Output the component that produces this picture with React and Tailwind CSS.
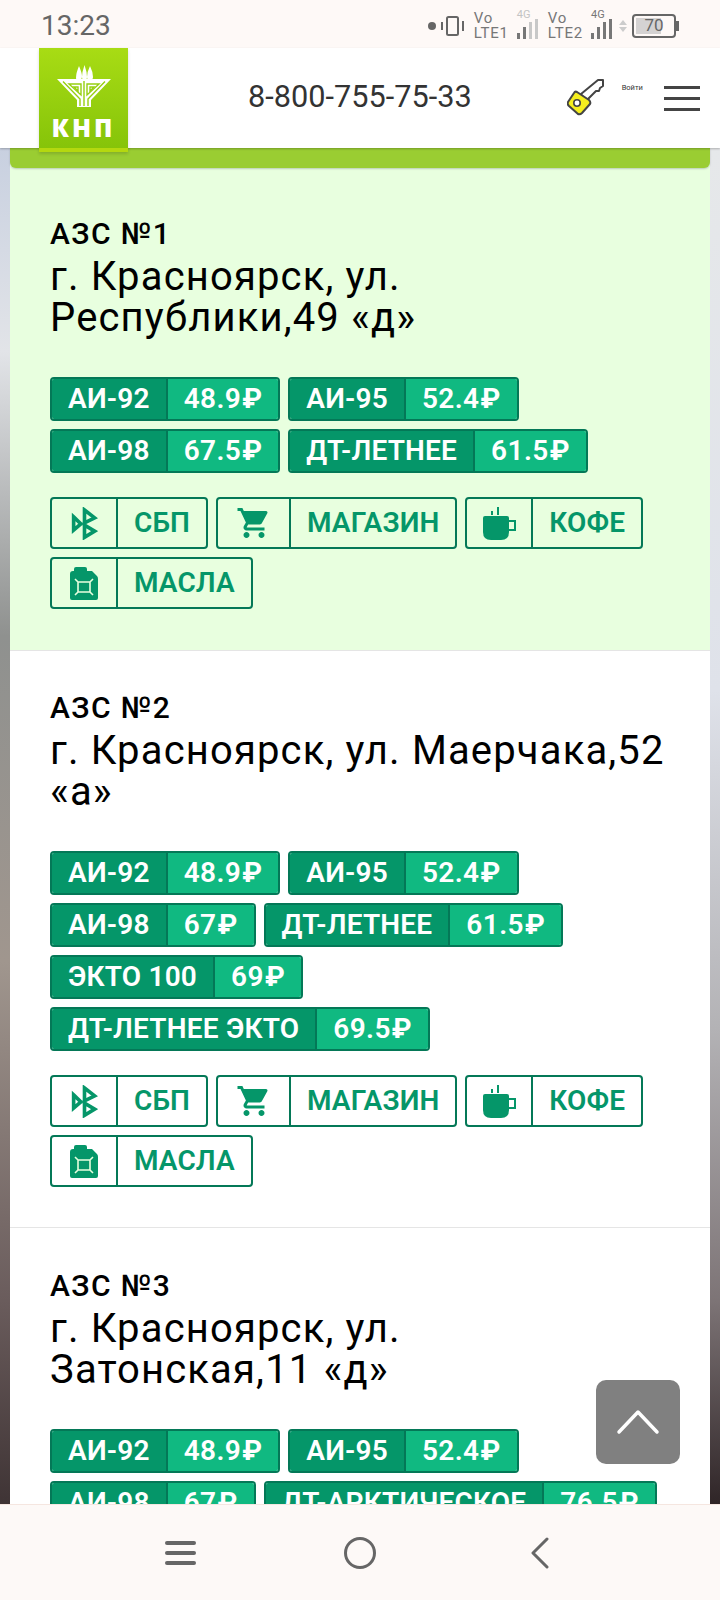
import React from "react";
import { MdShoppingCart } from "react-icons/md";

function Sbp() {
  return (
    <svg width="27" height="33" viewBox="30 33 82 100" fill="none" stroke="#059669" strokeWidth="11" strokeLinejoin="miter">
      <path d="M71 42 L102 66 L71 81 Z" />
      <path d="M38 63 L60 84 L38 103 Z" />
      <path d="M71 88 L102 106 L71 125 Z" />
    </svg>
  );
}
function Cart() {
  return <MdShoppingCart className="text-[36px] text-[#059669]" />;
}
function Cup() {
  return (
    <svg width="33" height="33" viewBox="0 0 33 33" fill="#059669">
      <rect x="8" y="4" width="2" height="4" />
      <rect x="14" y="0" width="2" height="8" />
      <path d="M0 11 Q0 9 2 9 H24 Q26 9 26 11 V25 Q26 33 18 33 H8 Q0 33 0 25 Z" />
      <path fillRule="evenodd" d="M26 13 H33 V24 H26 V22 H31 V15 H26 Z" />
    </svg>
  );
}
function Can() {
  return (
    <svg width="28" height="33" viewBox="0 0 28 33">
      <path fill="#059669" d="M6 0 H15 Q17 0 17 2 V4 H22 L27 9 Q28 10 28 12 V31 Q28 33 26 33 H2 Q0 33 0 31 V7 Q0 4 3 4 H4 V2 Q4 0 6 0 Z" />
      <path fill="none" stroke="#e8ffdf" strokeWidth="1.6" d="M8 15 H20 V25 H8 Z M5 12 L8 15 M23 12 L20 15 M5 28 L8 25 M23 28 L20 25" />
    </svg>
  );
}

function Price({ name, price }) {
  return (
    <div className="flex h-[44px] overflow-hidden rounded-[4px] border-2 border-[#047857] font-semibold text-[28px] leading-none tracking-[0.2px] text-white">
      <div className="flex items-center border-r-2 border-[#047857] bg-[#059669] pl-4 pr-[16px] whitespace-nowrap">{name}</div>
      <div className="flex items-center bg-[#10b981] pl-[16px] pr-[16px] whitespace-nowrap tracking-[0.4px]">
        {price}<span className="ml-[1px] font-bold">₽</span>
      </div>
    </div>
  );
}

function Tag({ icon, label, cell }) {
  return (
    <div className="flex h-[52px] rounded-[4px] border-2 border-[#047857] text-[28px] font-semibold leading-none tracking-[0.1px] text-[#059669]">
      <div className={`flex items-center justify-center border-r-2 border-[#047857] ${cell}`}>{icon}</div>
      <div className="flex items-center px-4 whitespace-nowrap">{label}</div>
    </div>
  );
}

const TAGS = [
  { icon: <Sbp />, label: "СБП", cell: "w-[66px]" },
  { icon: <Cart />, label: "МАГАЗИН", cell: "w-[73px]" },
  { icon: <Cup />, label: "КОФЕ", cell: "w-[66px]" },
  { icon: <Can />, label: "МАСЛА", cell: "w-[66px]" },
];

function Station({ title, lines, prices, className }) {
  return (
    <section className={className}>
      <h2 className="text-[30px] font-medium leading-[32px] tracking-[1.4px] text-black">{title}</h2>
      <p className="mt-[6px] pr-[2px] text-[40px] leading-[41px] tracking-[1.15px] text-black">{lines}</p>
      <div className="mt-[39px] flex flex-wrap gap-2">
        {prices.map((p) => (
          <Price key={p[0]} name={p[0]} price={p[1]} />
        ))}
      </div>
      <div className="mt-6 flex flex-wrap gap-2">
        {TAGS.map((t) => (
          <Tag key={t.label} icon={t.icon} label={t.label} cell={t.cell} />
        ))}
      </div>
    </section>
  );
}

function Signal({ faded }) {
  const c = faded ? "bg-[#c8c8c8]" : "bg-[#777]";
  return (
    <div className="relative flex h-[26px] w-[23px] items-end gap-[3px]">
      <span className={`absolute left-0 top-[-4px] text-[11px] leading-none ${faded ? "text-[#c4c4c4]" : "text-[#777]"}`}>4G</span>
      <span className="h-[6px] w-[3px] bg-[#777]" />
      <span className="h-[12px] w-[3px] bg-[#777]" />
      <span className={`h-[17px] w-[3px] ${c}`} />
      <span className={`h-[20px] w-[3px] ${c}`} />
    </div>
  );
}

function Lte({ n }) {
  return (
    <div className="text-[15px] leading-[15px] tracking-[0.8px] text-[#777]">
      <div>Vo</div>
      <div>LTE{n}</div>
    </div>
  );
}

export default function App() {
  return (
    <div className="flex h-[1600px] w-[720px] flex-col overflow-hidden font-['Roboto',sans-serif]">
      <div className="flex h-[48px] items-center justify-between bg-[#fef9f7] pl-[41px] pr-[41px] pt-[3px]">
        <span className="text-[28px] leading-none text-[#666]">13:23</span>
        <div className="flex items-center">
          <span className="h-[8px] w-[8px] rounded-full bg-[#666]" />
          <svg className="ml-[3px]" width="28" height="20" viewBox="0 0 28 20" fill="none" stroke="#666">
            <rect x="8" y="1" width="11" height="18" rx="1.5" strokeWidth="2" />
            <path d="M3 6 V14 M24 5 V15" strokeWidth="2" />
          </svg>
          <div className="ml-[7px]"><Lte n="1" /></div>
          <div className="ml-[8px]"><Signal faded /></div>
          <div className="ml-[8px]"><Lte n="2" /></div>
          <div className="ml-[8px]"><Signal /></div>
          <div className="ml-[5px] flex flex-col gap-[2px]">
            <span className="h-0 w-0 border-x-[4px] border-b-[5px] border-x-transparent border-b-[#ccc]" />
            <span className="h-0 w-0 border-x-[4px] border-t-[5px] border-x-transparent border-t-[#ccc]" />
          </div>
          <div className="relative ml-[5px] flex h-[24px] w-[44px] items-center rounded-[4px] border-[2px] border-[#666] p-[2px]">
            <div className="h-full w-[70%] bg-[#d4d2d2]" />
            <span className="absolute inset-0 flex items-center justify-center text-[17px] leading-none text-[#666]">70</span>
          </div>
          <span className="h-[10px] w-[3px] bg-[#666]" />
        </div>
      </div>

      <header className="relative z-10 flex h-[100px] items-center bg-white pl-[39px] shadow-[0_1px_2px_rgba(0,0,0,0.25)]">
        <div className="absolute left-[39px] top-0 flex h-[104px] w-[89px] flex-col items-center border-b-[4px] border-[#b4d80f] bg-gradient-to-b from-[#a8dc14] to-[#86c409] shadow-[0_2px_3px_rgba(0,0,0,0.15)]">
          <svg className="mt-[16px]" width="56" height="44" viewBox="0 0 56 44">
            <g fill="#fff">
              <path d="M20 14 Q20 9 23 2 Q26 9 26 12 Q26 16 23 16 Q20 16 20 14 Z M26 13 Q26 8 28.5 1 Q31 8 31 13 Q31 16 28.5 16 Q26 16 26 13 Z M31 13 Q31 8 34 2 Q37 8 37 13 Q37 16 34 16 Q31 16 31 13 Z" />
              <path d="M1 15 H55 L35 36 V43 H21 V36 Z" />
            </g>
            <g fill="none" stroke="#97d010" strokeWidth="1.4">
              <path d="M7 17.5 L24 35 V42 M49 17.5 L32 35 V42 M28 17 V42" />
              <path d="M13 20 H25 V31 Z M43 20 H31 V31 Z" />
              <path d="M18 23 H22 V27 Z M38 23 H34 V27 Z" />
            </g>
          </svg>
          <span className="mt-[7px] text-[25px] font-extrabold leading-none tracking-[3px] text-white font-['Open_Sans',sans-serif]">КНП</span>
        </div>
        <span className="ml-[209px] pb-[2px] text-[30.7px] leading-none text-[#333]">8-800-755-75-33</span>
        <svg className="ml-[95px]" width="38" height="38" viewBox="0 0 38 38">
          <path d="M14 15 L31 1 L36 1 L36 7 L33 9 L32 12 L29 12 L19 22 Z" fill="#fff" stroke="#444" strokeWidth="2" strokeLinejoin="round" />
          <path d="M10 13 L22 21 Q24 23 23 25 L15 34 Q13 36 11 35 L2 27 Q0 25 1 23 L7 14 Q8 12 10 13 Z" fill="#f5ee1e" stroke="#444" strokeWidth="2" strokeLinejoin="round" />
          <circle cx="10" cy="24" r="3.2" fill="#fff" stroke="#444" strokeWidth="1.6" />
        </svg>
        <div className="ml-[17px] mb-[20px] text-[7.5px] leading-none text-[#333]">Войти</div>
        <div className="ml-[21px] flex w-[36px] flex-col gap-[8px]">
          <span className="h-[3px] bg-[#444]" />
          <span className="h-[3px] bg-[#444]" />
          <span className="h-[3px] bg-[#444]" />
        </div>
      </header>

      <main className="relative flex min-h-0 flex-1 overflow-hidden">
        <div className="w-[10px] shrink-0 bg-[linear-gradient(to_bottom,#c8d0e0,#e2e4e8_15%,#8f918f_36%,#a0968e_60%,#6a5c5c_85%,#3f3435)]" />
        <div className="w-[700px] shrink-0">
          <div className="relative h-[20px] rounded-b-[6px] bg-[#9acd32] shadow-[0_1px_2px_rgba(0,0,0,0.2)]" />
          <Station
            title="АЗС №1"
            lines="г. Красноярск, ул. Республики,49 «д»"
            className="-mt-[6px] bg-[#e8ffdf] pl-10 pr-10 pt-[56px] pb-[41px]"
            prices={[["АИ-92", "48.9"], ["АИ-95", "52.4"], ["АИ-98", "67.5"], ["ДТ-ЛЕТНЕЕ", "61.5"]]}
          />
          <Station
            title="АЗС №2"
            lines="г. Красноярск, ул. Маерчака,52 «а»"
            className="border-t border-[#e5e5e5] bg-white pl-10 pr-10 pt-[41px] pb-[40px]"
            prices={[["АИ-92", "48.9"], ["АИ-95", "52.4"], ["АИ-98", "67"], ["ДТ-ЛЕТНЕЕ", "61.5"], ["ЭКТО 100", "69"], ["ДТ-ЛЕТНЕЕ ЭКТО", "69.5"]]}
          />
          <Station
            title="АЗС №3"
            lines="г. Красноярск, ул. Затонская,11 «д»"
            className="border-t border-[#e5e5e5] bg-white pl-10 pr-10 pt-[42px] pb-[40px]"
            prices={[["АИ-92", "48.9"], ["АИ-95", "52.4"], ["АИ-98", "67"], ["ДТ-АРКТИЧЕСКОЕ", "76.5"]]}
          />
        </div>
        <div className="w-[10px] shrink-0 bg-[linear-gradient(to_bottom,#e6e8ea,#dfe2ea_40%,#b3b2b5_65%,#7d7476_85%,#2f2527)]" />
        <div className="absolute left-[596px] top-[1232px] flex h-[84px] w-[84px] items-center justify-center rounded-[10px] bg-[#808080]">
          <svg width="44" height="26" viewBox="0 0 44 26" fill="none" stroke="#fff" strokeWidth="3.5" strokeLinecap="round" strokeLinejoin="round">
            <path d="M3 23 L22 3 L41 23" />
          </svg>
        </div>
      </main>

      <nav className="relative z-10 flex h-[96px] items-start border-t border-[#f5e6e0] bg-[#fdf9f7]">
        <div className="ml-[165px] mt-[36px] flex w-[31px] flex-col gap-[6px]">
          <span className="h-[4px] rounded-full bg-[#666]" />
          <span className="h-[4px] rounded-full bg-[#666]" />
          <span className="h-[4px] rounded-full bg-[#666]" />
        </div>
        <span className="ml-[148px] mt-[32px] h-[32px] w-[32px] rounded-full border-[3.5px] border-[#666]" />
        <svg className="ml-[154px] mt-[32px]" width="20" height="32" viewBox="0 0 20 32" fill="none" stroke="#666" strokeWidth="3" strokeLinecap="round" strokeLinejoin="round">
          <path d="M17 2 L3 16 L17 30" />
        </svg>
      </nav>
    </div>
  );
}
